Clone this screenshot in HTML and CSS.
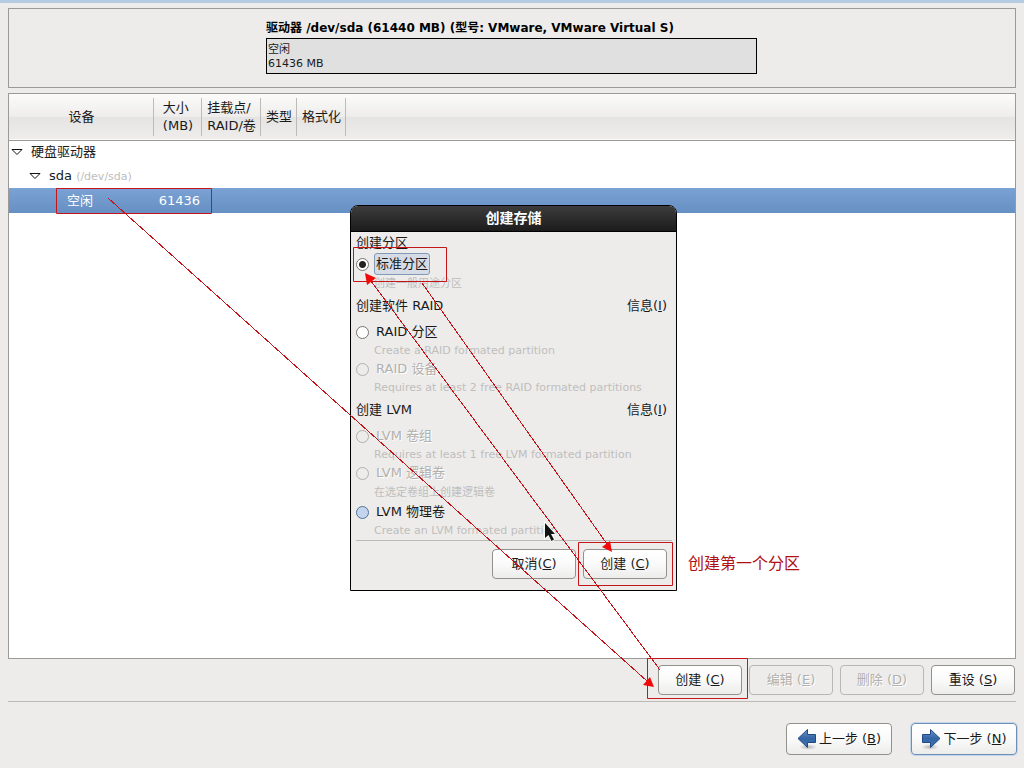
FILE: index.html
```
<!DOCTYPE html>
<html lang="zh-CN">
<head>
<meta charset="utf-8">
<title>创建存储</title>
<link rel="stylesheet" href="styles.css">
</head>
<body>
<div class="screen">
  <main class="installer">
    <section class="drive-panel">
      <div class="drive">
        <h1 class="drive-title">驱动器 /dev/sda (61440 MB) (型号: VMware, VMware Virtual S)</h1>
        <div class="drive-bar"><span>空闲</span><span>61436 MB</span></div>
      </div>
    </section>

    <section class="device-list">
      <table class="devices">
        <colgroup>
          <col class="col-device"><col class="col-size"><col class="col-mount"><col class="col-type"><col class="col-format"><col>
        </colgroup>
        <thead>
          <tr>
            <th><span>设备</span></th>
            <th><span>大小<br>(MB)</span></th>
            <th><span>挂载点/<br>RAID/卷</span></th>
            <th><span>类型</span></th>
            <th><span>格式化</span></th>
            <td></td>
          </tr>
        </thead>
        <tbody>
          <tr>
            <td><div class="node"><svg class="expander" viewBox="0 0 12 8"><path d="M1 1.5H11L6 6.5Z"/></svg><span>硬盘驱动器</span></div></td>
            <td></td><td></td><td></td><td></td><td></td>
          </tr>
          <tr>
            <td><div class="node level-1"><svg class="expander" viewBox="0 0 12 8"><path d="M1 1.5H11L6 6.5Z"/></svg><span>sda <small class="path">(/dev/sda)</small></span></div></td>
            <td></td><td></td><td></td><td></td><td></td>
          </tr>
          <tr class="selected">
            <td><div class="node level-2">空闲</div></td>
            <td class="size">61436</td><td></td><td></td><td></td><td></td>
          </tr>
        </tbody>
      </table>
    </section>

    <div class="actions">
      <button class="btn" type="button">创建 (<u>C</u>)</button>
      <button class="btn" type="button" disabled>编辑 (<u>E</u>)</button>
      <button class="btn" type="button" disabled>删除 (<u>D</u>)</button>
      <button class="btn" type="button">重设 (<u>S</u>)</button>
    </div>

    <footer class="nav">
      <button class="btn btn-nav" type="button">
        <svg class="arrow" viewBox="0 0 20 22"><defs><linearGradient id="blue" x1="0" y1="0" x2="0" y2="1"><stop offset="0" stop-color="#6a94c8"/><stop offset=".5" stop-color="#3465a4"/><stop offset="1" stop-color="#3f74b5"/></linearGradient><radialGradient id="shade"><stop offset="0" stop-color="#000" stop-opacity=".25"/><stop offset="1" stop-color="#000" stop-opacity="0"/></radialGradient></defs><ellipse cx="11" cy="19" rx="9" ry="3" fill="url(#shade)"/><path d="M1 10.500L10.500 1.500V6.500H18.500V14.500H10.500V19.500Z" fill="url(#blue)" stroke="#204a87"/></svg>
        <span>上一步 (<u>B</u>)</span>
      </button>
      <button class="btn btn-nav btn-default" type="button">
        <svg class="arrow" viewBox="0 0 20 22"><ellipse cx="9" cy="19" rx="9" ry="3" fill="url(#shade)"/><path d="M19 10.500L9.500 1.500V6.500H1.500V14.500H9.500V19.500Z" fill="url(#blue)" stroke="#204a87"/></svg>
        <span>下一步 (<u>N</u>)</span>
      </button>
    </footer>
  </main>

  <form class="dialog" role="dialog" aria-labelledby="dialog-title">
    <h2 class="dialog-title" id="dialog-title">创建存储</h2>
    <div class="dialog-body">
      <div class="group-head first"><span>创建分区</span></div>
      <label class="option focused"><input type="radio" name="kind" checked><span>标准分区</span></label>
      <p class="hint hint-zh">创建一般用途分区</p>

      <div class="group-head"><span>创建软件 RAID</span><a class="info" href="#">信息(<u>I</u>)</a></div>
      <label class="option"><input type="radio" name="kind"><span>RAID 分区</span></label>
      <p class="hint">Create a RAID formated partition</p>
      <label class="option"><input type="radio" name="kind" disabled><span>RAID 设备</span></label>
      <p class="hint">Requires at least 2 free RAID formated partitions</p>

      <div class="group-head"><span>创建 LVM</span><a class="info" href="#">信息(<u>I</u>)</a></div>
      <label class="option"><input type="radio" name="kind" disabled><span>LVM 卷组</span></label>
      <p class="hint">Requires at least 1 free LVM formated partition</p>
      <label class="option"><input type="radio" name="kind" disabled><span>LVM 逻辑卷</span></label>
      <p class="hint hint-zh">在选定卷组上创建逻辑卷</p>
      <label class="option hovered"><input type="radio" name="kind"><span>LVM 物理卷</span></label>
      <p class="hint">Create an LVM formated partition</p>
      <div class="dialog-actions">
        <button class="btn" type="button">取消(<u>C</u>)</button>
        <button class="btn" type="button">创建 (<u>C</u>)</button>
      </div>
    </div>
  </form>

  <svg class="marks" width="1024" height="768" viewBox="0 0 1024 768" aria-hidden="true">
    <g fill="none" stroke="#c4151b">
      <path d="M56.500 188.500H211.500V213.500H56.500Z"/>
      <path d="M353.500 247.500H446.500V281.500H353.500Z"/>
      <path d="M578.500 542.500H672.500V585.500H578.500Z"/>
      <path d="M647.500 658.500H747.500V698.500H647.500Z"/>
      <g shape-rendering="crispEdges"><path d="M108 198L647 681"/><path d="M660 670L371 281"/><path d="M422 283L607 544"/></g>
    </g>
    <g fill="#f00a0a">
      <path d="M654 687L643 685L650 677Z"/>
      <path d="M365 273L376 278L367 285Z"/>
      <path d="M612 552L602 547L610 541Z"/>
    </g>
    <path d="M545 523V538L548.500 535L551.500 541L554 539.500L551 534H555Z" fill="#111" stroke="#fff" stroke-width="1.500" paint-order="stroke"/>
  </svg>
  <p class="note">创建第一个分区</p>
</div>
</body>
</html>
```
FILE: styles.css
```
* { box-sizing: border-box; }
body {
  margin: 0;
  background: #edeceb;
  color: #1a1a1a;
  font: 13px/18px "DejaVu Sans", "Noto Sans CJK SC", sans-serif;
}
h1, h2, p { margin: 0; }
.screen { position: relative; overflow: hidden; }
.installer {
  display: flex;
  flex-direction: column;
  min-height: 100vh;
  padding: 5px 8px 13px;
  border-top: 3px solid #b5cbe3;
}

.drive-panel {
  display: flex;
  justify-content: center;
  height: 80px;
  padding: 10px 9px 10px 8px;
  border: 1px solid #9c9a98;
}
.drive { width: 491px; }
.drive-title {
  font-size: 12px;
  line-height: 18px;
  white-space: nowrap;
  color: #000;
}
.drive-bar {
  display: flex;
  flex-direction: column;
  height: 36px;
  margin-top: 1px;
  padding: 4px 1px;
  border: 1px solid #000;
  background: #e0e0e0;
  font-size: 11px;
  line-height: 14px;
}

.device-list {
  flex: 1;
  margin-top: 5px;
  border: 1px solid #9c9a98;
  background: #fff;
}
.devices {
  width: 100%;
  table-layout: fixed;
  border-collapse: collapse;
}
.col-device { width: 145px; }
.col-size { width: 48px; }
.col-mount { width: 59px; }
.col-type { width: 36px; }
.col-format { width: 49px; }
.devices th, .devices td { padding: 0; }
.devices thead tr {
  height: 46px;
  border-bottom: 1px solid #9c9a98;
  background: linear-gradient(#fbfbfa, #eeedec 50%, #e6e4e2 51%, #eeedec);
}
.devices th {
  background: linear-gradient(#bdbbb8, #bdbbb8) right center / 1px 38px no-repeat;
  font-weight: normal;
  white-space: nowrap;
}
.devices th span { display: inline-block; text-align: left; }
.devices tbody tr { height: 24px; }
.devices tbody .selected { height: 25px; }
.node {
  display: flex;
  align-items: center;
  gap: 8px;
  padding-left: 2px;
  white-space: nowrap;
}
.level-1 { padding-left: 20px; }
.level-2 { padding-left: 58px; }
.expander {
  width: 12px;
  height: 8px;
  fill: #fff;
  stroke: #111;
}
.path { font-size: 11px; color: #bdbdbd; }
.selected {
  background: linear-gradient(#7ba2d4, #668fc3);
  color: #fff;
}
.devices .size { padding-right: 2px; text-align: right; }

.btn {
  display: flex;
  align-items: center;
  justify-content: center;
  width: 84px;
  height: 30px;
  padding: 0;
  border: 1px solid #93918e;
  border-radius: 4px;
  background: linear-gradient(#fff, #fafafa 50%, #ececeb);
  color: #1a1a1a;
  font: inherit;
  white-space: pre;
}
.btn:disabled {
  border-color: #b9b7b4;
  background: #edeceb;
  color: #b2b0ad;
  text-shadow: 1px 1px #fff;
}
.actions {
  display: flex;
  justify-content: flex-end;
  gap: 7px;
  padding: 6px 1px 6px 0;
  border-bottom: 1px solid #bcbab7;
}
.nav {
  display: flex;
  justify-content: flex-end;
  gap: 19px;
  margin: 21px -1px 0 0;
}
.btn-nav { width: 106px; height: 32px; gap: 2px; }
.btn-default { border-color: #6c8fb8; box-shadow: 0 0 0 1px #c5d6ea; }
.arrow { width: 20px; height: 22px; }

.dialog {
  position: absolute;
  left: 350px;
  top: 205px;
  width: 327px;
  border: 1px solid #000;
  border-radius: 8px 8px 0 0;
  background: #edeceb;
  overflow: hidden;
}
.dialog-title {
  height: 26px;
  border-bottom: 1px solid #000;
  background: linear-gradient(#3c3c3c, #2c2c2c 50%, #1c1c1c);
  color: #fff;
  font-size: 14px;
  line-height: 24px;
  text-align: center;
}
.dialog-body { padding: 1px 4px 11px 5px; }
.group-head {
  display: flex;
  justify-content: space-between;
  margin: 4px 5px 6px 0;
  line-height: 20px;
}
.group-head.first { margin: 0 0 1px; }
.info { color: inherit; text-decoration: none; }
.option {
  display: flex;
  align-items: center;
  gap: 5px;
  height: 20px;
}
.option span { padding: 0 1px; border: 1px solid transparent; }
.option input {
  appearance: none;
  width: 13px;
  height: 13px;
  margin: 0;
  border: 1px solid #777573;
  border-radius: 50%;
  background: #fff;
}
.option input:checked { background: radial-gradient(circle, #222 3px, #fff 4px); }
.option input:disabled { border-color: #b2b0ad; background: #edeceb; }
.option input:disabled + span { color: #b2b0ad; text-shadow: 1px 1px #fff; }
.option.hovered input { border-color: #52729c; background: #c3d5ec; }
.focused span {
  border-color: #8299b8;
  border-radius: 3px;
  background: #d5dce6;
  line-height: 20px;
}
.hint {
  margin-top: 1px;
  padding-left: 18px;
  color: #c0bebc;
  font-size: 11px;
  line-height: 16px;
  white-space: nowrap;
}
.hint-zh { margin: 2px 0 1px; }
.dialog-actions {
  display: flex;
  justify-content: flex-end;
  gap: 7px;
  margin-top: 1px;
  padding: 8px 5px 0 0;
  border-top: 1px solid #bcbab7;
}
.marks { position: absolute; left: 0; top: 0; pointer-events: none; }
.note {
  position: absolute;
  left: 688px;
  top: 552px;
  color: #b01015;
  font-size: 16px;
  line-height: 24px;
}
```
